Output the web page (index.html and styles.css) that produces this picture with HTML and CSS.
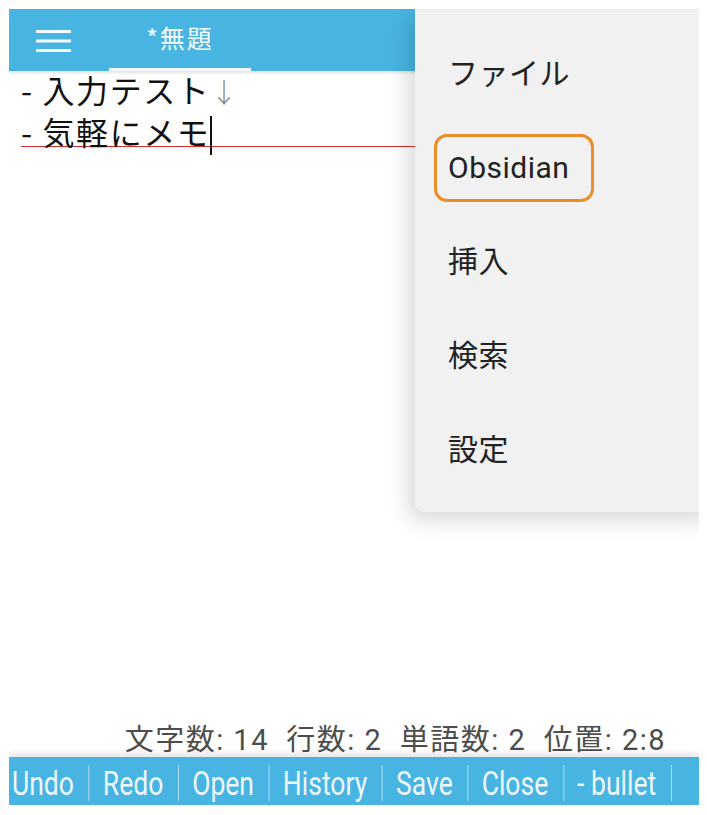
FILE: index.html
```html
<!DOCTYPE html>
<html lang="ja">
<head>
<meta charset="utf-8">
<title>*無題</title>
<link rel="stylesheet" href="styles.css">
</head>
<body>
<div class="frame">
  <header class="appbar">
    <svg class="hamburger" width="35" height="24" viewBox="0 0 35 24" aria-hidden="true">
      <rect x="0" y="1" width="35" height="3" fill="#f4fbfe"/>
      <rect x="0" y="10.5" width="35" height="3" fill="#f4fbfe"/>
      <rect x="0" y="20" width="35" height="3" fill="#f4fbfe"/>
    </svg>
    <div class="tab">*無題</div>
  </header>

  <main class="editor">
    <div class="line">- 入力テスト<span class="nl">↓</span></div>
    <div class="line current">- 気軽にメモ<span class="caret"></span></div>
  </main>

  <div class="status">文字数: 14&nbsp; 行数: 2&nbsp; 単語数: 2&nbsp; 位置: 2:8</div>

  <nav class="toolbar">
    <div class="tools">
      <span class="tool first">Undo</span>
      <span class="tool">Redo</span>
      <span class="tool">Open</span>
      <span class="tool">History</span>
      <span class="tool">Save</span>
      <span class="tool">Close</span>
      <span class="tool">- bullet</span>
    </div>
  </nav>

  <ul class="menu">
    <li class="item">ファイル</li>
    <li class="item"><span class="highlight">Obsidian</span></li>
    <li class="item">挿入</li>
    <li class="item">検索</li>
    <li class="item">設定</li>
  </ul>
</div>
</body>
</html>
```

FILE: styles.css
```css
html, body {
  margin: 0;
  padding: 0;
  background: #ffffff;
}

body {
  padding: 9px 8px 10px 9px;
  font-family: Roboto, "Noto Sans CJK JP", sans-serif;
}

.frame {
  position: relative;
  width: 690px;
  height: 796px;
  display: flex;
  flex-direction: column;
  background: #ffffff;
  overflow: hidden;
}

.appbar {
  flex: 0 0 62px;
  display: flex;
  align-items: stretch;
  background: #48b4e2;
  padding-left: 27px;
  box-sizing: border-box;
  box-shadow: 0 2px 3px rgba(0,0,0,0.12);
  position: relative;
  z-index: 1;
}

.hamburger {
  align-self: flex-start;
  margin-top: 20px;
}

.tab {
  width: 142px;
  margin-left: 38px;
  box-sizing: border-box;
  border-bottom: 3px solid #f2f8fb;
  color: #f4fbfe;
  font-family: "Noto Sans CJK JP", sans-serif;
  font-size: 25px;
  letter-spacing: 2px;
  display: flex;
  align-items: center;
  justify-content: center;
  padding-bottom: 3px;
}

.editor {
  flex: 1;
  margin-top: -3px;
  padding: 0 0 0 12px;
  font-family: "Noto Sans CJK JP", sans-serif;
  font-size: 32px;
  letter-spacing: 1.6px;
  color: #111;
}

.line {
  height: 42px;
  line-height: 42px;
  white-space: nowrap;
}

.line.current {
  background: linear-gradient(#d92b2b, #d92b2b) 0 36px / 100% 1px no-repeat;
}

.nl {
  color: #8a8a8a;
  font-size: 27px;
  font-weight: 300;
}

.caret {
  display: inline-block;
  width: 2px;
  height: 39px;
  background: #111;
  vertical-align: -10px;
  margin-left: 0;
}

.status {
  flex: 0 0 auto;
  text-align: right;
  padding-right: 33px;
  font-family: Roboto, "Noto Sans CJK JP", sans-serif;
  font-size: 29px;
  letter-spacing: 1.5px;
  line-height: 34px;
  color: #4d4d4d;
  white-space: nowrap;
}

.toolbar {
  flex: 0 0 48px;
  display: flex;
  align-items: center;
  background: #48b4e2;
  box-shadow: 0 -4px 6px rgba(0,0,0,0.10);
  padding-left: 3px;
  overflow: hidden;
}

.tools {
  display: flex;
  align-items: center;
  transform: scaleX(0.78);
  transform-origin: left center;
  font-family: Roboto, sans-serif;
  font-size: 34px;
  color: #eef7fc;
  white-space: nowrap;
  padding-top: 3px;
}

.tool {
  padding: 0 19px 0 17px;
  border-right: 1px solid rgba(255,255,255,0.7);
  line-height: 36px;
}

.tool.first {
  padding-left: 0;
}

.menu {
  position: absolute;
  top: 0;
  left: 406px;
  width: 300px;
  height: 503px;
  margin: 0;
  padding: 14px 0 16px 0;
  box-sizing: border-box;
  list-style: none;
  background: #f1f1f1;
  border-top: 1px solid #dcf1f8;
  border-radius: 0 0 0 9px;
  box-shadow: -6px 8px 22px rgba(0,0,0,0.16);
  z-index: 5;
}

.item {
  height: 94px;
  display: flex;
  align-items: center;
  padding-left: 33px;
  font-family: Roboto, "Noto Sans CJK JP", sans-serif;
  font-size: 30px;
  color: #222;
  letter-spacing: 0.5px;
}

.highlight {
  margin-left: -14px;
  padding: 14px 22px 14px 11px;
  border: 3px solid #ea8d2b;
  border-radius: 13px;
  line-height: 34px;
  margin-top: 6px;
}
```
